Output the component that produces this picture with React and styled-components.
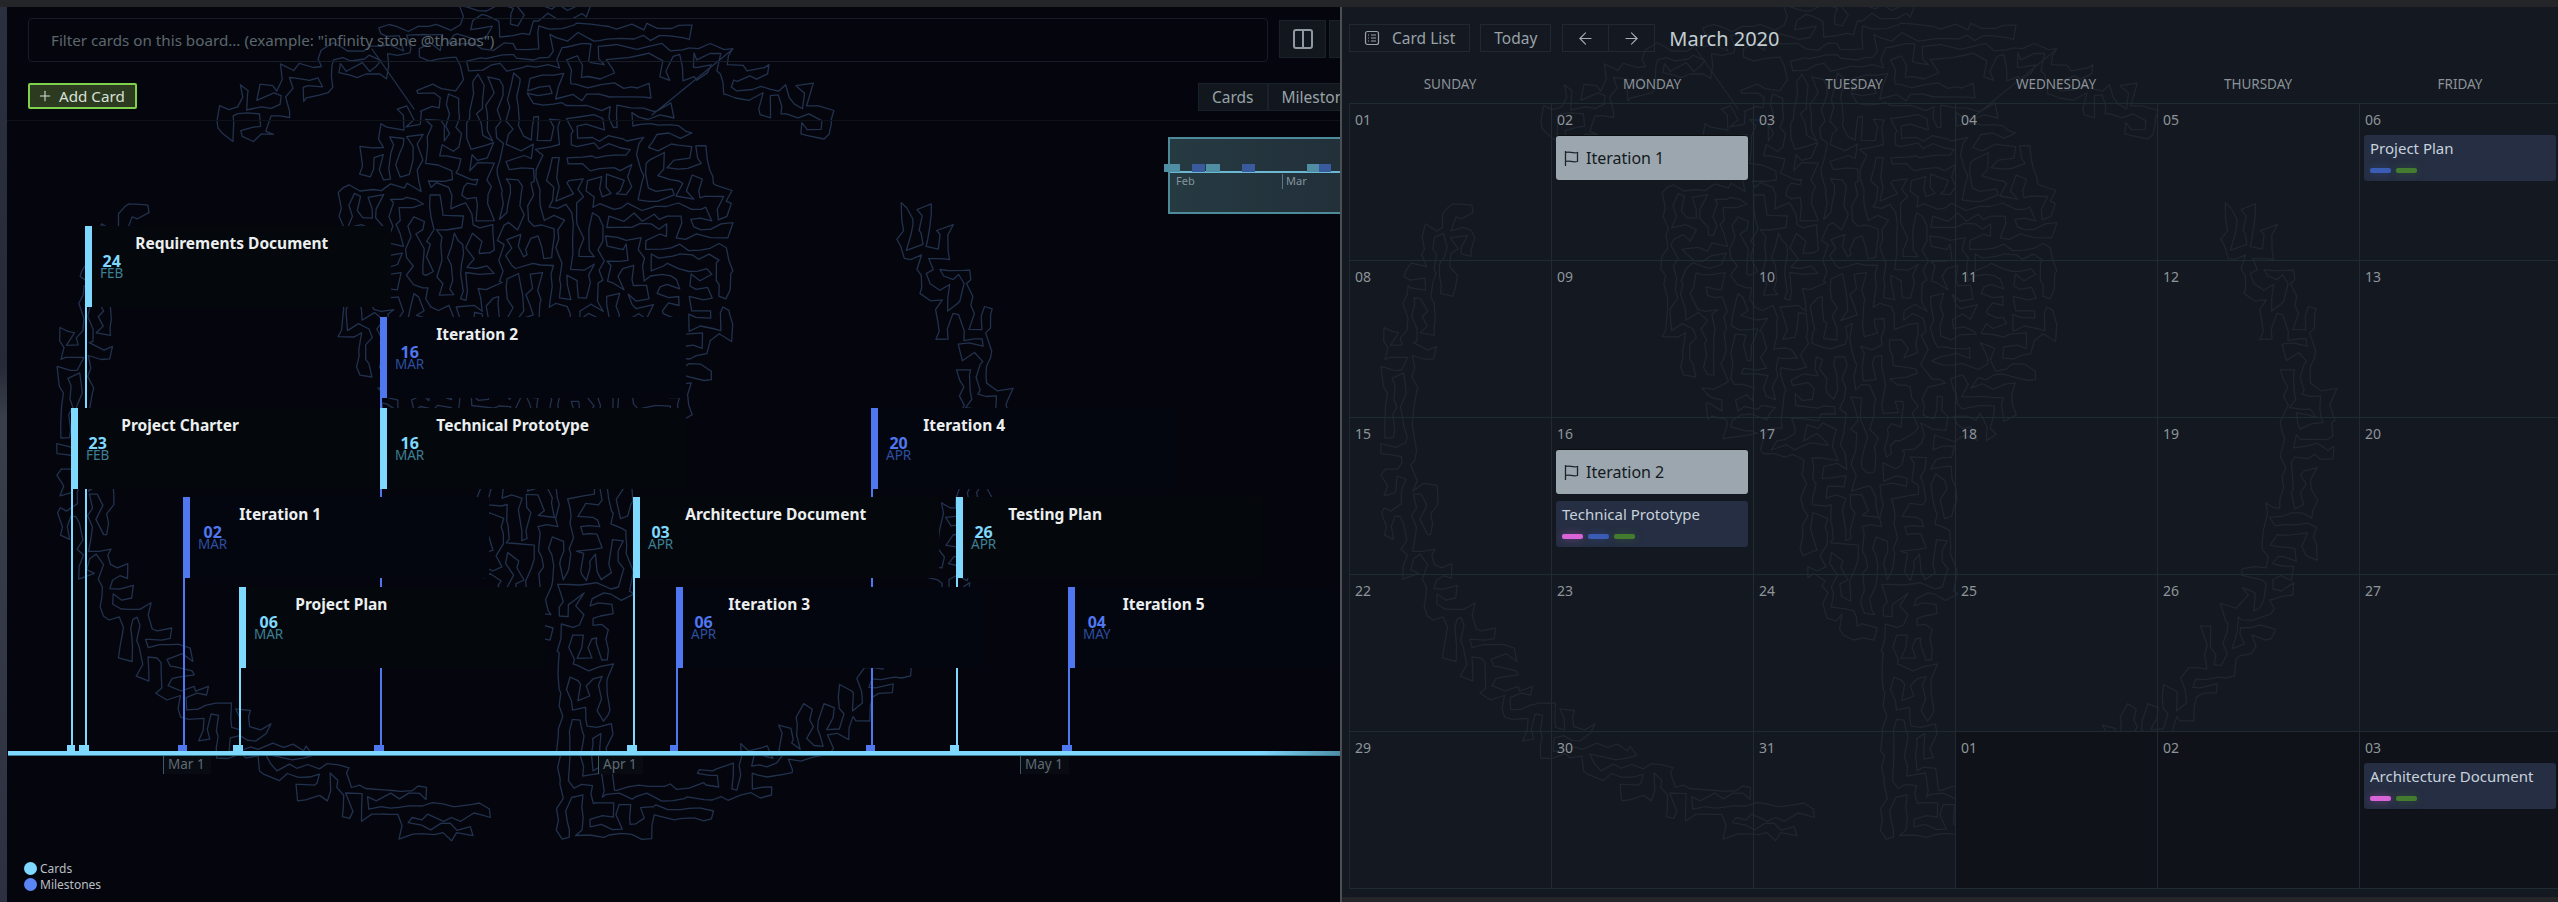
import React from "react";
import styled, { createGlobalStyle } from "styled-components";
import { Plus, Columns2, ArrowLeft, ArrowRight } from "lucide-react";

const CARD = "#7fd9ff";
const MILESTONE = "#4f78f0";

const GlobalStyle = createGlobalStyle`
  html, body {
    margin: 0;
    padding: 0;
    height: 100%;
    background: #05060d;
    font-family: "Noto Sans", "Open Sans", sans-serif;
    overflow: hidden;
  }
  * { box-sizing: border-box; }
`;

// seeded so the background line stays the same on every render
function makeRandom(seed) {
  let a = seed;
  return () => {
    a = (a + 0x6d2b79f5) | 0;
    let t = Math.imul(a ^ (a >>> 15), 1 | a);
    t = (t + Math.imul(t ^ (t >>> 7), 61 | t)) ^ t;
    return ((t ^ (t >>> 14)) >>> 0) / 4294967296;
  };
}

// the wallpaper is one maze line: outline of a random spanning tree over a shape
function buildArt() {
  const rnd = makeRandom(11);
  const S = 10;
  const CELL = S * 2;
  const COLS = 54;
  const ROWS = 43;

  const inShape = (x, y) => {
    const blobA = ((x - 540) / 205) ** 2 + ((y - 265) / 215) ** 2 < 1;
    const blobB = ((x - 562) / 85) ** 2 + ((y - 520) / 125) ** 2 < 1;
    const column = x > 558 && x < 618 && y > 600 && y < 840;
    const r = Math.sqrt(((x - 532) / 480) ** 2 + ((y - 426) / 420) ** 2);
    const deg = (Math.atan2(y - 426, x - 532) * 180) / Math.PI;
    const gap = (deg > -44 && deg < -30) || (deg > -150 && deg < -136) || (deg > 84 && deg < 96);
    const ring = r > 0.89 && r < 1 && !gap;
    return blobA || blobB || column || ring;
  };

  const key = (i, j) => i + j * COLS;
  const cells = new Set();
  for (let j = 0; j < ROWS; j++) {
    for (let i = 0; i < COLS; i++) {
      if (inShape(i * CELL + S, j * CELL + S)) cells.add(key(i, j));
    }
  }

  const links = new Set();
  const seen = new Set();
  const dirs = [[1, 0], [-1, 0], [0, 1], [0, -1]];
  cells.forEach((start) => {
    if (seen.has(start)) return;
    seen.add(start);
    const frontier = [start];
    while (frontier.length) {
      const at = Math.floor(rnd() * frontier.length);
      const cur = frontier[at];
      const ci = cur % COLS;
      const cj = Math.floor(cur / COLS);
      const open = dirs
        .map(([dx, dy]) => [ci + dx, cj + dy])
        .filter(([a, b]) => a >= 0 && a < COLS && cells.has(key(a, b)) && !seen.has(key(a, b)));
      if (!open.length) {
        frontier.splice(at, 1);
        continue;
      }
      const [ni, nj] = open[Math.floor(rnd() * open.length)];
      const next = key(ni, nj);
      seen.add(next);
      links.add(`${Math.min(cur, next)}_${Math.max(cur, next)}`);
      frontier.push(next);
    }
  });
  const linked = (a, b) => links.has(`${Math.min(a, b)}_${Math.max(a, b)}`);

  const nodes = new Map();
  const pt = (i, j) => {
    const k = `${i},${j}`;
    if (!nodes.has(k)) {
      const x = i * S + (rnd() - 0.5) * 9;
      const y = j * S + (rnd() - 0.5) * 9;
      nodes.set(k, `${x.toFixed(1)} ${y.toFixed(1)}`);
    }
    return nodes.get(k);
  };

  let d = "";
  const seg = (a, b, c, e) => {
    d += `M${pt(a, b)}L${pt(c, e)}`;
  };
  cells.forEach((c) => {
    const i = c % COLS;
    const j = Math.floor(c / COLS);
    const x = i * 2;
    const y = j * 2;
    if (linked(c, key(i + 1, j))) {
      seg(x + 1, y, x + 2, y);
      seg(x + 1, y + 1, x + 2, y + 1);
    } else seg(x + 1, y, x + 1, y + 1);
    if (linked(c, key(i, j + 1))) {
      seg(x, y + 1, x, y + 2);
      seg(x + 1, y + 1, x + 1, y + 2);
    } else seg(x, y + 1, x + 1, y + 1);
    if (!linked(c, key(i - 1, j))) seg(x, y, x, y + 1);
    if (!linked(c, key(i, j - 1))) seg(x, y, x + 1, y);
  });
  return d + "M372 42L414 102M733 42L652 108";
}

const artPath = buildArt();

const cards = [
  { title: "Requirements Document", day: "24", month: "FEB", x: 85, y: 226 },
  { title: "Iteration 2", day: "16", month: "MAR", x: 380, y: 317, milestone: true },
  { title: "Project Charter", day: "23", month: "FEB", x: 71, y: 408 },
  { title: "Technical Prototype", day: "16", month: "MAR", x: 380, y: 408 },
  { title: "Iteration 4", day: "20", month: "APR", x: 871, y: 408, milestone: true },
  { title: "Iteration 1", day: "02", month: "MAR", x: 183, y: 497, milestone: true },
  { title: "Architecture Document", day: "03", month: "APR", x: 633, y: 497 },
  { title: "Testing Plan", day: "26", month: "APR", x: 956, y: 497 },
  { title: "Project Plan", day: "06", month: "MAR", x: 239, y: 587 },
  { title: "Iteration 3", day: "06", month: "APR", x: 676, y: 587, milestone: true },
  { title: "Iteration 5", day: "04", month: "MAY", x: 1068, y: 587, milestone: true },
];

// milestone stems go last, they sit on top where two share a date
const stems = [...cards].sort((a, b) => Number(!!a.milestone) - Number(!!b.milestone));

const markers = [
  { x: 67, w: 8 }, { x: 79, w: 10 }, { x: 178, w: 9, milestone: true },
  { x: 233, w: 10 }, { x: 374, w: 10, milestone: true }, { x: 627, w: 10 },
  { x: 670, w: 8, milestone: true }, { x: 866, w: 9, milestone: true },
  { x: 950, w: 9 }, { x: 1062, w: 10, milestone: true },
];

const months = [
  { label: "Mar 1", x: 163 },
  { label: "Apr 1", x: 598 },
  { label: "May 1", x: 1020 },
];

const miniMarks = [
  { x: 0, w: 16 }, { x: 28, w: 13, milestone: true }, { x: 42, w: 14 },
  { x: 78, w: 13, milestone: true }, { x: 143, w: 12 }, { x: 155, w: 12, milestone: true },
];

const weekdays = ["Sunday", "Monday", "Tuesday", "Wednesday", "Thursday", "Friday"];

const LABEL_COLORS = { pink: "#d964d8", blue: "#3a5cb4", green: "#437b2f" };

const days = [
  "01", "02", "03", "04", "05", "06",
  "08", "09", "10", "11", "12", "13",
  "15", "16", "17", "18", "19", "20",
  "22", "23", "24", "25", "26", "27",
  "29", "30", "31", "01", "02", "03",
];

const events = {
  1: [{ title: "Iteration 1", milestone: true }],
  5: [{ title: "Project Plan", labels: ["blue", "green"] }],
  13: [
    { title: "Iteration 2", milestone: true },
    { title: "Technical Prototype", labels: ["pink", "blue", "green"] },
  ],
  29: [{ title: "Architecture Document", labels: ["pink", "green"] }],
};

const Shell = styled.div`
  height: 100vh;
  display: flex;
  flex-direction: column;
  background: #05060d;
`;

const TopEdge = styled.div`
  height: 7px;
  flex: none;
  background: #232528;
`;

const Body = styled.div`
  flex: 1;
  min-height: 0;
  display: flex;
`;

const LeftEdge = styled.div`
  width: 7px;
  flex: none;
  background: linear-gradient(#2b3040, #262a38 40%, #3a3f4c 46%, #2c3040);
`;

const Divider = styled.div`
  width: 2px;
  flex: none;
  background: #4b4e53;
`;

const ArtLayer = styled.svg`
  position: absolute;
  top: 0;
  left: 0;
  width: 100%;
  height: 100%;
  pointer-events: none;
`;

const TimelinePane = styled.div`
  position: relative;
  width: 1333px;
  flex: none;
  overflow: hidden;
  display: flex;
  flex-direction: column;
  background: #05060d;
`;

const FilterRow = styled.div`
  position: relative;
  display: flex;
  width: 1420px;
  padding: 11px 0 0 21px;
  gap: 11px;
`;

const FilterInput = styled.input`
  width: 1240px;
  height: 44px;
  padding: 0 22px;
  border: 1px solid #161d27;
  border-radius: 4px;
  background: transparent;
  font: 15.2px "Noto Sans", sans-serif;
  outline: none;
  &::placeholder { color: #5c676e; opacity: 1; }
`;

const ButtonGroup = styled.div`
  display: flex;
`;

const IconButton = styled.div`
  width: 47px;
  height: 38px;
  margin-top: 2px;
  margin-right: 3px;
  display: flex;
  align-items: center;
  justify-content: center;
  background: #12171d;
  border: 1px solid #1a2229;
  color: #8f999f;
`;

const Toolbar = styled.div`
  position: relative;
  display: flex;
  align-items: flex-start;
  justify-content: space-between;
  width: 100%;
  height: 59px;
  padding-top: 21px;
  padding-left: 21px;
  border-bottom: 1px solid #0e1219;
`;

const AddCard = styled.button`
  display: flex;
  align-items: center;
  gap: 6px;
  width: 109px;
  height: 26px;
  padding: 0 0 0 7px;
  border: 2px solid #7fd04a;
  border-radius: 2px;
  background: #2c3a20;
  color: #d8e0d8;
  font: 15.2px "Noto Sans", sans-serif;
`;

const ViewTabs = styled.div`
  display: flex;
  flex: none;
  width: 172px;
  margin-left: auto;
  margin-right: -30px;
`;

const ViewTab = styled.div`
  height: 28px;
  padding: 0 13px;
  display: flex;
  align-items: center;
  background: #12171d;
  border: 1px solid #1a2229;
  color: #98a2a8;
  font-size: 15.5px;
  white-space: nowrap;
`;

const Chart = styled.div`
  position: relative;
  flex: 1;
`;

const Stem = styled.div`
  position: absolute;
  left: ${(p) => p.$x - 7}px;
  top: ${(p) => p.$y - 121}px;
  bottom: ${902 - 751}px;
  width: 2px;
  background: ${(p) => (p.$milestone ? MILESTONE : CARD)};
`;

const Card = styled.div`
  position: absolute;
  left: ${(p) => p.$x - 7}px;
  top: ${(p) => p.$y - 121}px;
  width: 306px;
  height: 81px;
  display: flex;
  background: ${(p) => (p.$milestone ? "#03050f" : "#04080c")};
  border-left: 7px solid ${(p) => (p.$milestone ? MILESTONE : CARD)};
`;

const DateBlock = styled.div`
  margin: 28px 12px 0 8px;
  text-align: center;
`;

const Day = styled.div`
  font-size: 16px;
  font-weight: 700;
  line-height: 14px;
  color: ${(p) => (p.$milestone ? MILESTONE : CARD)};
`;

const Month = styled.div`
  font-size: 13.5px;
  line-height: 11px;
  color: ${(p) => (p.$milestone ? "#2d4f9f" : "#3f7f93")};
`;

const CardTitle = styled.div`
  margin-top: 6px;
  font-size: 15.5px;
  font-weight: 700;
  line-height: 22px;
  color: #ecefef;
  white-space: nowrap;
`;

const Marker = styled.div`
  position: absolute;
  left: ${(p) => p.$x - 7}px;
  top: ${745 - 121}px;
  width: ${(p) => p.$w}px;
  height: 6px;
  background: ${(p) => (p.$milestone ? MILESTONE : CARD)};
`;

const Axis = styled.div`
  position: absolute;
  left: 1px;
  right: 0;
  top: ${751 - 121}px;
  height: 5px;
  background: linear-gradient(90deg, ${CARD} 94%, #4d8ea6);
  border-bottom: 1px solid #3f7f93;
`;

const MonthTick = styled.div`
  position: absolute;
  left: ${(p) => p.$x - 7}px;
  top: ${756 - 121}px;
  height: 18px;
  padding: 0 6px 0 4px;
  border-left: 1px solid #3c5a66;
  background: #080c12;
  color: #5f6a72;
  font-size: 13.5px;
  line-height: 17px;
`;

const Legend = styled.div`
  position: absolute;
  left: 17px;
  bottom: 10px;
  display: flex;
  flex-direction: column;
`;

const LegendRow = styled.div`
  display: flex;
  align-items: center;
  gap: 3px;
  height: 15.5px;
  color: #b9bfc3;
  font-size: 12px;
`;

const LegendDot = styled.span`
  width: 13px;
  height: 13px;
  border-radius: 50%;
  background: ${(p) => (p.$milestone ? "#5a85f5" : CARD)};
`;

const Minimap = styled.div`
  position: absolute;
  left: ${1168 - 7}px;
  top: ${137 - 121}px;
  width: 200px;
  height: 77px;
  border: 2px solid #4d8b9b;
  background: linear-gradient(90deg, #263a42, #22303a 80%);
`;

const MiniMark = styled.div`
  position: absolute;
  left: ${(p) => p.$x - 6}px;
  top: 25px;
  width: ${(p) => p.$w}px;
  height: 8px;
  background: ${(p) => (p.$milestone ? "#3a5a9e" : "#4f8ea3")};
`;

const MiniAxis = styled.div`
  position: absolute;
  left: 0;
  right: 0;
  top: 32px;
  height: 2px;
  background: #6cb7d1;
`;

const MiniLabel = styled.div`
  position: absolute;
  left: ${(p) => p.$x}px;
  top: 35px;
  padding-left: 3px;
  border-left: ${(p) => (p.$tick ? "1px solid #5c7883" : "none")};
  height: 15px;
  color: #84949b;
  font-size: 11px;
  line-height: 14px;
`;

const CalendarPane = styled.div`
  position: relative;
  flex: 1;
  min-width: 0;
  overflow: hidden;
  display: flex;
  flex-direction: column;
  padding-left: 7px;
  background: #141820;
`;

const CalendarBar = styled.div`
  position: relative;
  display: flex;
  align-items: center;
  gap: 10px;
  height: 28px;
  margin-top: 17px;
`;

const CalButton = styled.div`
  height: 28px;
  padding: 0 ${(p) => p.$pad || 13}px;
  display: flex;
  align-items: center;
  gap: 12px;
  border: 1px solid #1f2833;
  color: #98a2a8;
  font-size: 15.5px;
`;

const NavGroup = styled.div`
  display: flex;
  margin-left: 1px;
`;

const NavButton = styled.div`
  width: 47px;
  height: 28px;
  display: flex;
  align-items: center;
  justify-content: center;
  border: 1px solid #1f2833;
  margin-left: ${(p) => (p.$joined ? "-1px" : "0")};
  color: #a4aeb4;
`;

const MonthTitle = styled.div`
  margin-left: 4px;
  color: #c2ced2;
  font-size: 20px;
`;

const WeekRow = styled.div`
  position: relative;
  display: grid;
  grid-template-columns: repeat(6, 202px);
  height: 51px;
  align-items: center;
  flex: none;
`;

const WeekDay = styled.div`
  padding-top: 13px;
  text-align: center;
  text-transform: uppercase;
  color: #8b9399;
  font-size: 13.5px;
`;

const MonthGrid = styled.div`
  position: relative;
  display: grid;
  width: 1213px;
  flex: none;
  grid-template-columns: repeat(6, 202px);
  grid-template-rows: repeat(5, 157px);
  border-top: 1px solid #1f2a33;
  border-left: 1px solid #1f2a33;
`;

const DayCell = styled.div`
  padding: 6px 5px 0 5px;
  border-right: 1px solid #1f2a33;
  border-bottom: 1px solid #1f2a33;
  background: ${(p) => (p.$outside ? "#0f1218" : "transparent")};
`;

const DayNumber = styled.div`
  height: 25px;
  color: #8d959b;
  font-size: 14px;
  line-height: 20px;
`;

const MilestoneEvent = styled.div`
  height: 45px;
  margin: 0 0 7px -1px;
  display: flex;
  align-items: center;
  gap: 6px;
  padding: 0 7px;
  border-radius: 3px;
  border-top: 1px solid #0b0d11;
  background: #9ba6ae;
  color: #141920;
  font-size: 16px;
`;

const CardEvent = styled.div`
  height: 46px;
  margin-left: -1px;
  padding: 2px 6px 0;
  border-radius: 3px;
  background: #252e42;
  color: #c8d2dc;
  font-size: 15px;
  line-height: 22px;
  white-space: nowrap;
`;

const LabelRow = styled.div`
  display: flex;
  gap: 5px;
  margin-top: 9px;
`;

const LabelPill = styled.span`
  width: 21px;
  height: 5px;
  border-radius: 2px;
  background: ${(p) => LABEL_COLORS[p.$color]};
  box-shadow: 0 0 8px ${(p) => LABEL_COLORS[p.$color]}66;
`;

const FooterEdge = styled.div`
  position: absolute;
  left: 0;
  right: 0;
  bottom: 0;
  height: 5px;
  background: #232528;
`;

function Art({ color, viewX, width }) {
  return (
    <ArtLayer viewBox={`${viewX} 0 ${width} 895`} preserveAspectRatio="xMinYMin slice">
      <path d={artPath} fill="none" stroke={color} strokeWidth="1.3" strokeLinecap="round" />
    </ArtLayer>
  );
}

function ListIcon() {
  return (
    <svg width="16" height="16" viewBox="0 0 16 16" fill="none" stroke="currentColor" strokeWidth="1.2">
      <rect x="1.5" y="1.5" width="13" height="13" rx="2" />
      <path d="M4 5h1M7 5h5M4 8h1M7 8h5M4 11h1M7 11h5" />
    </svg>
  );
}

function FlagIcon() {
  return (
    <svg width="17" height="18" viewBox="0 0 17 18" fill="none" stroke="#1d232a" strokeWidth="1.3">
      <path d="M2.5 2v15M2.5 3.5c4-1.5 7 1.5 12 0v9c-5 1.5-8-1.5-12 0" />
    </svg>
  );
}

function DayContent({ index }) {
  const list = events[index] || [];
  return list.map((ev) =>
    ev.milestone ? (
      <MilestoneEvent key={ev.title}>
        <FlagIcon />
        {ev.title}
      </MilestoneEvent>
    ) : (
      <CardEvent key={ev.title}>
        {ev.title}
        <LabelRow>
          {ev.labels.map((l) => (
            <LabelPill key={l} $color={l} />
          ))}
        </LabelRow>
      </CardEvent>
    )
  );
}

export default function App() {
  return (
    <Shell>
      <GlobalStyle />
      <TopEdge />
      <Body>
        <LeftEdge />
        <TimelinePane>
          <Art color="#22324e" viewX={7} width={1333} />
          <FilterRow>
            <FilterInput placeholder={'Filter cards on this board... (example: "infinity stone @thanos")'} />
            <ButtonGroup>
              <IconButton>
                <Columns2 size={24} strokeWidth={2} />
              </IconButton>
              <IconButton />
            </ButtonGroup>
          </FilterRow>
          <Toolbar>
            <AddCard>
              <Plus size={16} strokeWidth={1.6} />
              Add Card
            </AddCard>
            <ViewTabs>
              <ViewTab>Cards</ViewTab>
              <ViewTab>Milestones</ViewTab>
            </ViewTabs>
          </Toolbar>
          <Chart>
            {stems.map((c) => (
              <Stem key={c.title} $x={c.x} $y={c.y} $milestone={c.milestone} />
            ))}
            {cards.map((c) => (
              <Card key={c.title} $x={c.x} $y={c.y} $milestone={c.milestone}>
                <DateBlock>
                  <Day $milestone={c.milestone}>{c.day}</Day>
                  <Month $milestone={c.milestone}>{c.month}</Month>
                </DateBlock>
                <CardTitle>{c.title}</CardTitle>
              </Card>
            ))}
            {markers.map((m) => (
              <Marker key={m.x} $x={m.x} $w={m.w} $milestone={m.milestone} />
            ))}
            <Axis />
            {months.map((m) => (
              <MonthTick key={m.label} $x={m.x}>
                {m.label}
              </MonthTick>
            ))}
            <Minimap>
              <MiniAxis />
              {miniMarks.map((m) => (
                <MiniMark key={m.x} $x={m.x} $w={m.w} $milestone={m.milestone} />
              ))}
              <MiniLabel $x={3}>Feb</MiniLabel>
              <MiniLabel $x={112} $tick>
                Mar
              </MiniLabel>
            </Minimap>
            <Legend>
              <LegendRow>
                <LegendDot />
                Cards
              </LegendRow>
              <LegendRow>
                <LegendDot $milestone />
                Milestones
              </LegendRow>
            </Legend>
          </Chart>
        </TimelinePane>
        <Divider />
        <CalendarPane>
          <Art color="#20262f" viewX={18} width={1216} />
          <CalendarBar>
            <CalButton $pad={14}>
              <ListIcon />
              Card List
            </CalButton>
            <CalButton>Today</CalButton>
            <NavGroup>
              <NavButton>
                <ArrowLeft size={19} strokeWidth={1.4} />
              </NavButton>
              <NavButton $joined>
                <ArrowRight size={19} strokeWidth={1.4} />
              </NavButton>
            </NavGroup>
            <MonthTitle>March 2020</MonthTitle>
          </CalendarBar>
          <WeekRow>
            {weekdays.map((w) => (
              <WeekDay key={w}>{w}</WeekDay>
            ))}
          </WeekRow>
          <MonthGrid>
            {days.map((n, i) => (
              <DayCell key={i} $outside={i >= 27}>
                <DayNumber>{n}</DayNumber>
                <DayContent index={i} />
              </DayCell>
            ))}
          </MonthGrid>
          <FooterEdge />
        </CalendarPane>
      </Body>
    </Shell>
  );
}
